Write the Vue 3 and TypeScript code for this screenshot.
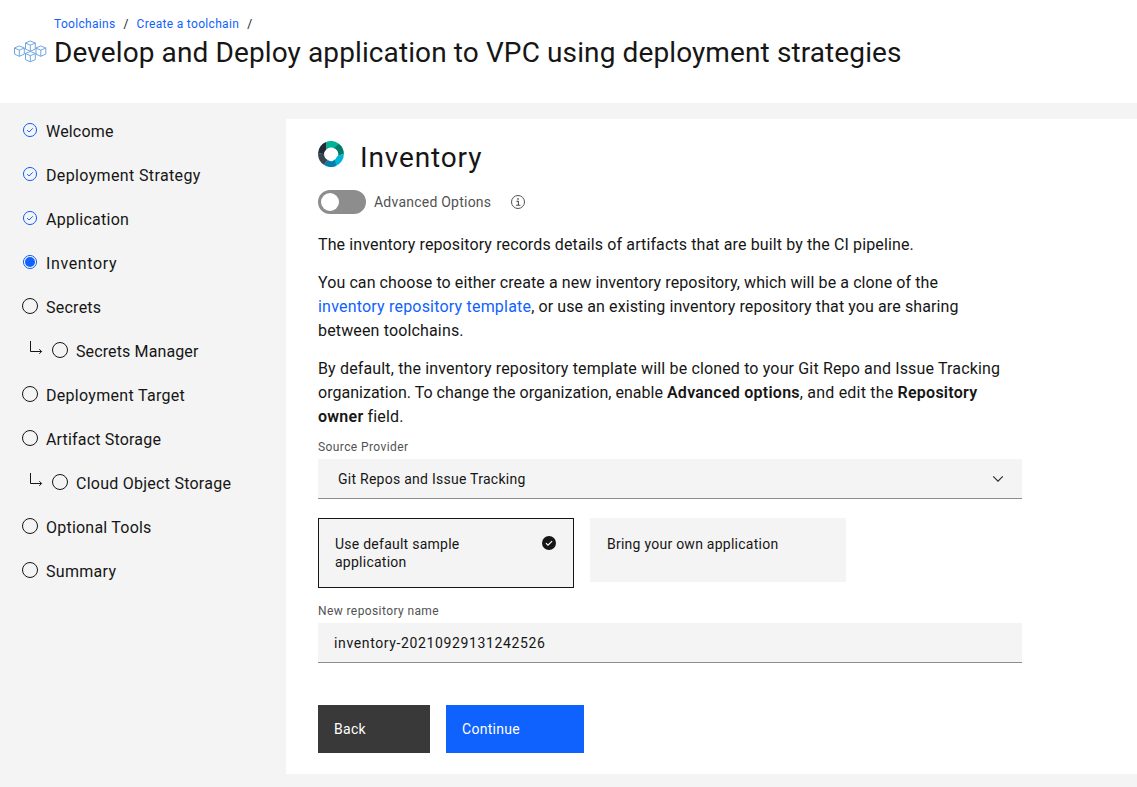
<script setup lang="ts">
type StepState = 'done' | 'current' | 'todo'

interface Step {
  label: string
  state: StepState
  tracking: number
  nested?: boolean
}

const steps: Step[] = [
  { label: 'Welcome', state: 'done', tracking: 0.18 },
  { label: 'Deployment Strategy', state: 'done', tracking: 0.36 },
  { label: 'Application', state: 'done', tracking: 0.25 },
  { label: 'Inventory', state: 'current', tracking: 0.62 },
  { label: 'Secrets', state: 'todo', tracking: 0.25 },
  { label: 'Secrets Manager', state: 'todo', tracking: 0.12, nested: true },
  { label: 'Deployment Target', state: 'todo', tracking: 0.3 },
  { label: 'Artifact Storage', state: 'todo', tracking: 0.18 },
  { label: 'Cloud Object Storage', state: 'todo', tracking: 0.25, nested: true },
  { label: 'Optional Tools', state: 'todo', tracking: 0.22 },
  { label: 'Summary', state: 'todo', tracking: 0.3 },
]

const cubes = [
  { x: 11, y: 0.5 },
  { x: 0, y: 5.5 },
  { x: 21.5, y: 5.5 },
  { x: 11, y: 11 },
]
</script>

<template>
  <div class="page">
    <header class="header">
      <svg class="logo" width="34" height="24" viewBox="0 0 34 24">
        <g v-for="(c, i) in cubes" :key="i" :transform="`translate(${c.x} ${c.y})`">
          <path class="cube" d="M5.3 .5 10.3 2.4V8.6L5.3 10.8 .5 8.6V2.4ZM.5 2.6 5.3 4.6 10.3 2.6M5.3 4.6V10.8" />
        </g>
      </svg>
      <div class="heading">
        <nav class="crumbs">
          <a>Toolchains</a><span>/</span><a>Create a toolchain</a><span>/</span>
        </nav>
        <h1>Develop and Deploy application to VPC using deployment strategies</h1>
      </div>
    </header>

    <div class="body">
      <ul class="steps">
        <li v-for="s in steps" :key="s.label" :class="{ nested: s.nested }">
          <svg v-if="s.nested" class="elbow" width="14" height="14" viewBox="0 0 14 14">
            <path d="M1.5 0V10.5H12.5M10.3 8.2 12.6 10.5 10.3 12.8" />
          </svg>
          <svg class="mark" :class="s.state" width="16" height="16" viewBox="0 0 16 16">
            <circle cx="8" cy="8" :r="s.state === 'todo' ? 7.5 : 6.55" />
            <path v-if="s.state === 'done'" d="M5.2 8.1 7.1 10 10.8 6.3" />
            <circle v-if="s.state === 'current'" class="dot" cx="8" cy="8" r="5" />
          </svg>
          <span :style="{ letterSpacing: s.tracking + 'px' }">{{ s.label }}</span>
        </li>
      </ul>

      <main class="panel">
        <div class="title-row">
          <svg width="26" height="26" viewBox="0 0 26 26">
            <path fill="#00b398" d="M8 1.1A13 13 0 0 1 20.5 2.4L17 7.8A7 7 0 0 0 8.4 8.6Z" />
            <path fill="#007d69" d="M20.5 2.4A13 13 0 0 1 25.9 12.8L20 15A7 7 0 0 0 16.4 7.2Z" />
            <path fill="#00b4d8" d="M25.9 12.8A13 13 0 0 1 17.5 25.2L15 19.5A7 7 0 0 0 19.2 15.2Z" />
            <path fill="#047fa9" d="M18 25A13 13 0 0 1 5.8 23.8L9.8 19A7 7 0 0 0 17 19.2Z" />
            <path fill="#36454f" d="M5.8 23.8A13 13 0 0 1 .1 12L6 13.2A7 7 0 0 0 9.8 19Z" />
            <path fill="#1f2a35" d="M.1 12A13 13 0 0 1 8 1.1L8.4 8.6A7 7 0 0 0 6 13.2Z" />
            <circle cx="13" cy="13" r="6.2" fill="#fff" />
          </svg>
          <h2>Inventory</h2>
        </div>

        <div class="toggle-row">
          <span class="toggle"></span>
          <span class="toggle-label">Advanced Options</span>
          <svg width="16" height="16" viewBox="0 0 16 16">
            <circle cx="8" cy="8" r="6.5" fill="none" stroke="#525252" />
            <path d="M6.5 7.4H8.4V11M6 11.3H10.4" fill="none" stroke="#525252" stroke-width="1.1" />
            <circle cx="8" cy="4.9" r=".85" fill="#525252" />
          </svg>
        </div>

        <p class="l1">The inventory repository records details of artifacts that are built by the CI pipeline.</p>
        <p>
          <span class="l2">You can choose to either create a new inventory repository, which will be a clone of the</span><br />
          <span class="l3"><a>inventory repository template</a>, or use an existing inventory repository that you are sharing</span><br />
          <span class="l4">between toolchains.</span>
        </p>
        <p>
          <span class="l5">By default, the inventory repository template will be cloned to your Git Repo and Issue Tracking</span><br />
          <span class="l6">organization. To change the organization, enable <b>Advanced options</b><span class="mid">, and edit the </span><b>Repository</b></span><br />
          <span class="l7"><b>owner</b> field.</span>
        </p>

        <label class="field-label">Source Provider</label>
        <div class="field select">
          <span>Git Repos and Issue Tracking</span>
          <svg width="16" height="16" viewBox="0 0 16 16">
            <path d="M3.2 5.4 8 10.2 12.8 5.4" fill="none" stroke="#262626" stroke-width="1.1" />
          </svg>
        </div>

        <div class="tiles">
          <div class="tile selected">
            <span>Use default sample<br />application</span>
            <svg width="16" height="16" viewBox="0 0 16 16">
              <circle cx="8" cy="8" r="7" fill="#161616" />
              <path d="M4.9 8.1 7 10.2 11.1 6.1" fill="none" stroke="#fff" stroke-width="1.2" />
            </svg>
          </div>
          <div class="tile"><span>Bring your own application</span></div>
        </div>

        <label class="field-label repo">New repository name</label>
        <div class="field"><span class="name">inventory-20210929131242526</span></div>

        <div class="actions">
          <button class="back">Back</button>
          <button class="continue">Continue</button>
        </div>
      </main>
    </div>
  </div>
</template>

<style>
body {
  margin: 0;
  overflow: hidden;
}
</style>

<style scoped>
.page {
  width: 1137px;
  height: 787px;
  display: flex;
  flex-direction: column;
  background: #fff;
  color: #161616;
  font-family: Roboto, 'Liberation Sans', sans-serif;
  font-size: 16px;
  white-space: nowrap;
}
svg {
  display: block;
  flex: none;
}
a {
  color: #0f62fe;
}
.header {
  height: 103px;
  display: flex;
}
.logo {
  margin: 39.5px 0 0 14px;
}
.cube {
  fill: #fff;
  stroke: #68a2de;
  stroke-width: 0.95;
}
.heading {
  margin: 16px 0 0 6px;
}
.crumbs {
  display: flex;
  font-size: 12px;
  line-height: 16px;
  letter-spacing: 0.32px;
}
.crumbs span {
  width: 5px;
  margin: 0 8px;
}
h1,
h2 {
  margin: 0;
  font-size: 28px;
  font-weight: 400;
  line-height: 36px;
}
h1 {
  margin-top: 3px;
  letter-spacing: 0.11px;
}
.body {
  flex: 1;
  display: flex;
  background: #f4f4f4;
}
.steps {
  width: 286px;
  margin: 0;
  padding: 6px 0 0 22px;
  box-sizing: border-box;
  list-style: none;
}
.steps li {
  height: 44px;
  display: flex;
  align-items: center;
}
.mark {
  margin: -2px 8px 0 0;
  fill: none;
  stroke: #161616;
}
.mark.done,
.mark.current {
  stroke: #0f62fe;
}
.mark .dot {
  fill: #0f62fe;
  stroke: none;
}
.nested {
  padding-left: 7px;
}
.elbow {
  margin: -6px 9px 0 0;
  fill: none;
  stroke: #161616;
}
.panel {
  width: 851px;
  height: 655px;
  margin-top: 16px;
  padding: 21px 0 0 32px;
  box-sizing: border-box;
  background: #fff;
}
.title-row {
  height: 36px;
  display: flex;
}
.title-row svg {
  margin-top: 1px;
}
h2 {
  margin-left: 16px;
  letter-spacing: 0.85px;
}
.toggle-row {
  height: 24px;
  margin-top: 14px;
  display: flex;
  align-items: center;
  font-size: 14px;
  color: #525252;
}
.toggle {
  width: 42px;
  height: 18px;
  padding: 3px;
  border-radius: 12px;
  background: #8d8d8d;
}
.toggle::before {
  content: '';
  display: block;
  width: 18px;
  height: 18px;
  border-radius: 50%;
  background: #fff;
}
.toggle-label {
  width: 128px;
  margin: 0 8px;
  letter-spacing: 0.23px;
}
p {
  margin: 0 0 14px;
  line-height: 24px;
}
.l1 {
  margin-top: 19px;
  letter-spacing: 0.12px;
}
.l2 {
  letter-spacing: 0.09px;
}
.l3 {
  letter-spacing: 0.1px;
}
.l3 a {
  letter-spacing: 0.2px;
}
.l4,
.l5 {
  letter-spacing: 0.15px;
}
.l6 {
  letter-spacing: 0.02px;
}
.l6 .mid {
  letter-spacing: 0.2px;
}
.l7 {
  letter-spacing: 0.15px;
}
b {
  font-weight: 600;
  letter-spacing: 0.25px;
}
.field-label {
  display: block;
  height: 16px;
  margin-top: -4px;
  font-size: 12px;
  line-height: 16px;
  letter-spacing: 0.4px;
  color: #525252;
}
.field {
  width: 704px;
  height: 40px;
  margin-top: 4px;
  padding: 0 16px;
  box-sizing: border-box;
  display: flex;
  align-items: center;
  justify-content: space-between;
  border-bottom: 1px solid #8d8d8d;
  background: #f4f4f4;
  font-size: 14px;
  letter-spacing: 0.26px;
}
.select {
  padding-left: 20px;
}
.name {
  letter-spacing: 0.63px;
}
.tiles {
  height: 70px;
  margin-top: 19px;
  display: flex;
  align-items: flex-start;
  gap: 16px;
  font-size: 14px;
  line-height: 18px;
  letter-spacing: 0.25px;
}
.tile {
  width: 256px;
  height: 64px;
  padding: 17px;
  box-sizing: border-box;
  display: flex;
  justify-content: space-between;
  background: #f4f4f4;
}
.tile.selected {
  height: 70px;
  padding: 16px;
  border: 1px solid #161616;
}
.repo {
  margin-top: 15px;
}
.actions {
  margin-top: 42px;
  display: flex;
  gap: 16px;
}
button {
  height: 48px;
  padding: 0 16px;
  border: 0;
  color: #fff;
  font: inherit;
  font-size: 14px;
  text-align: left;
  letter-spacing: 0.3px;
}
.back {
  width: 112px;
  background: #393939;
}
.continue {
  width: 138px;
  background: #0f62fe;
}
</style>
